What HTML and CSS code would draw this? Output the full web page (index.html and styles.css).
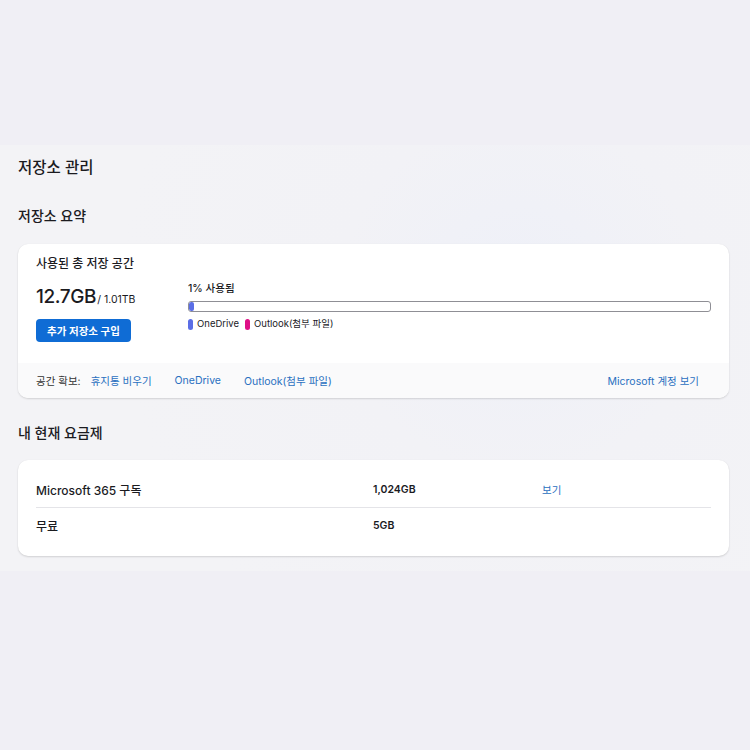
FILE: index.html
```html
<!DOCTYPE html>
<html lang="ko">
<head>
<meta charset="utf-8">
<title>저장소 관리</title>
<link rel="stylesheet" href="styles.css">
</head>
<body>
<div class="top"></div>
<main class="main">
  <h1 class="page-title">저장소 관리</h1>
  <h2 class="section-title">저장소 요약</h2>
  <section class="card summary">
    <div class="summary-body">
      <div class="summary-left">
        <div class="label">사용된 총 저장 공간</div>
        <div class="amount"><span class="used">12.7GB</span><span class="total">/ 1.01TB</span></div>
        <button class="buy">추가 저장소 구입</button>
      </div>
      <div class="summary-right">
        <div class="percent">1% 사용됨</div>
        <div class="bar"><div class="bar-fill" style="width:1%"></div></div>
        <div class="legend">
          <span class="legend-item"><span class="pill pill-blue"></span>OneDrive</span>
          <span class="legend-item"><span class="pill pill-pink"></span>Outlook(첨부 파일)</span>
        </div>
      </div>
    </div>
    <div class="summary-foot">
      <span class="foot-label">공간 확보:</span>
      <a class="link" href="#">휴지통 비우기</a>
      <a class="link" href="#">OneDrive</a>
      <a class="link" href="#">Outlook(첨부 파일)</a>
      <a class="link push" href="#">Microsoft 계정 보기</a>
    </div>
  </section>
  <h2 class="section-title plan-title">내 현재 요금제</h2>
  <section class="card plans">
    <div class="plan-row">
      <span class="plan-name">Microsoft 365 구독</span>
      <span class="plan-size">1,024GB</span>
      <a class="link" href="#">보기</a>
    </div>
    <div class="plan-row">
      <span class="plan-name">무료</span>
      <span class="plan-size">5GB</span>
      <span></span>
    </div>
  </section>
</main>
</body>
</html>
```
FILE: styles.css
```css
* { box-sizing: border-box; }
html, body { margin: 0; padding: 0; }
body {
  background: #f0eff5;
  font-family: Inter, "Noto Sans CJK KR", sans-serif;
  color: #1b1b1f;
  width: 750px;
  height: 750px;
  overflow: hidden;
}
.top { height: 145px; }
.main {
  background: radial-gradient(circle at 520px 150px, #eef0f8 0, #f2f2f6 180px, #f3f3f6 400px);
  padding: 12px 21px 15px 18px;
}
.page-title {
  margin: 0;
  font-size: 15.5px;
  font-weight: 500;
  line-height: 22px;
}
.section-title {
  margin: 27px 0 0;
  font-size: 14px;
  font-weight: 500;
  line-height: 20px;
}
.card {
  background: #fff;
  border-radius: 10px;
  box-shadow: 0 1px 2px rgba(0,0,0,0.14), 0 0 1px rgba(0,0,0,0.06);
  overflow: hidden;
}
.summary { margin-top: 18px; }
.summary-body {
  display: flex;
  padding: 11px 18px 0 18px;
  height: 119px;
}
.summary-left { width: 152px; }
.label { font-size: 12px; line-height: 18px; font-weight: 500; }
.amount { margin-top: 12px; line-height: 24px; }
.used { font-size: 19px; font-weight: 500; letter-spacing: -0.4px; }
.total { font-size: 10.5px; margin-left: 1px; }
.buy {
  margin-top: 7px;
  display: block;
  width: 95px;
  height: 23px;
  border: none;
  border-radius: 4px;
  background: #0f6cd5;
  color: #fff;
  font-family: inherit;
  font-size: 10.5px;
  font-weight: 600;
  padding: 0;
}
.summary-right { flex: 1; padding-top: 27px; }
.percent { font-size: 10.5px; font-weight: 500; line-height: 14px; }
.bar {
  margin-top: 5px;
  height: 11px;
  border: 1px solid #8f8f95;
  border-radius: 3px;
  overflow: hidden;
}
.bar-fill { height: 100%; min-width: 5px; background: #5b6ee6; border-radius: 2px; }
.legend {
  display: flex;
  gap: 6px;
  margin-top: 6px;
  font-size: 9.5px;
  line-height: 12px;
}
.legend-item { display: flex; align-items: center; gap: 4px; }
.pill { width: 5px; height: 11px; border-radius: 3px; display: inline-block; }
.pill-blue { background: #5b6ee6; }
.pill-pink { background: #de0f86; }
.summary-foot {
  display: flex;
  align-items: center;
  height: 35px;
  padding: 0 30px 0 18px;
  background: #fafafb;
  font-size: 10.5px;
}
.foot-label { color: #333; margin-right: 10px; }
.link { color: #2a70c0; text-decoration: none; margin-right: 23px; }
.summary-foot .push { margin-left: auto; margin-right: 0; }
.plan-title { margin-top: 25px; }
.plans {
  margin-top: 17px;
  padding: 11px 18px 13px;
}
.plan-row {
  display: grid;
  grid-template-columns: 337px 169px 1fr;
  align-items: center;
  height: 36px;
}
.plan-row + .plan-row { border-top: 1px solid #e4e4e8; }
.plan-name { font-size: 12px; font-weight: 500; }
.plan-size { font-size: 10.5px; font-weight: 600; }
.plan-row .link { font-size: 10.5px; margin: 0; }
```
